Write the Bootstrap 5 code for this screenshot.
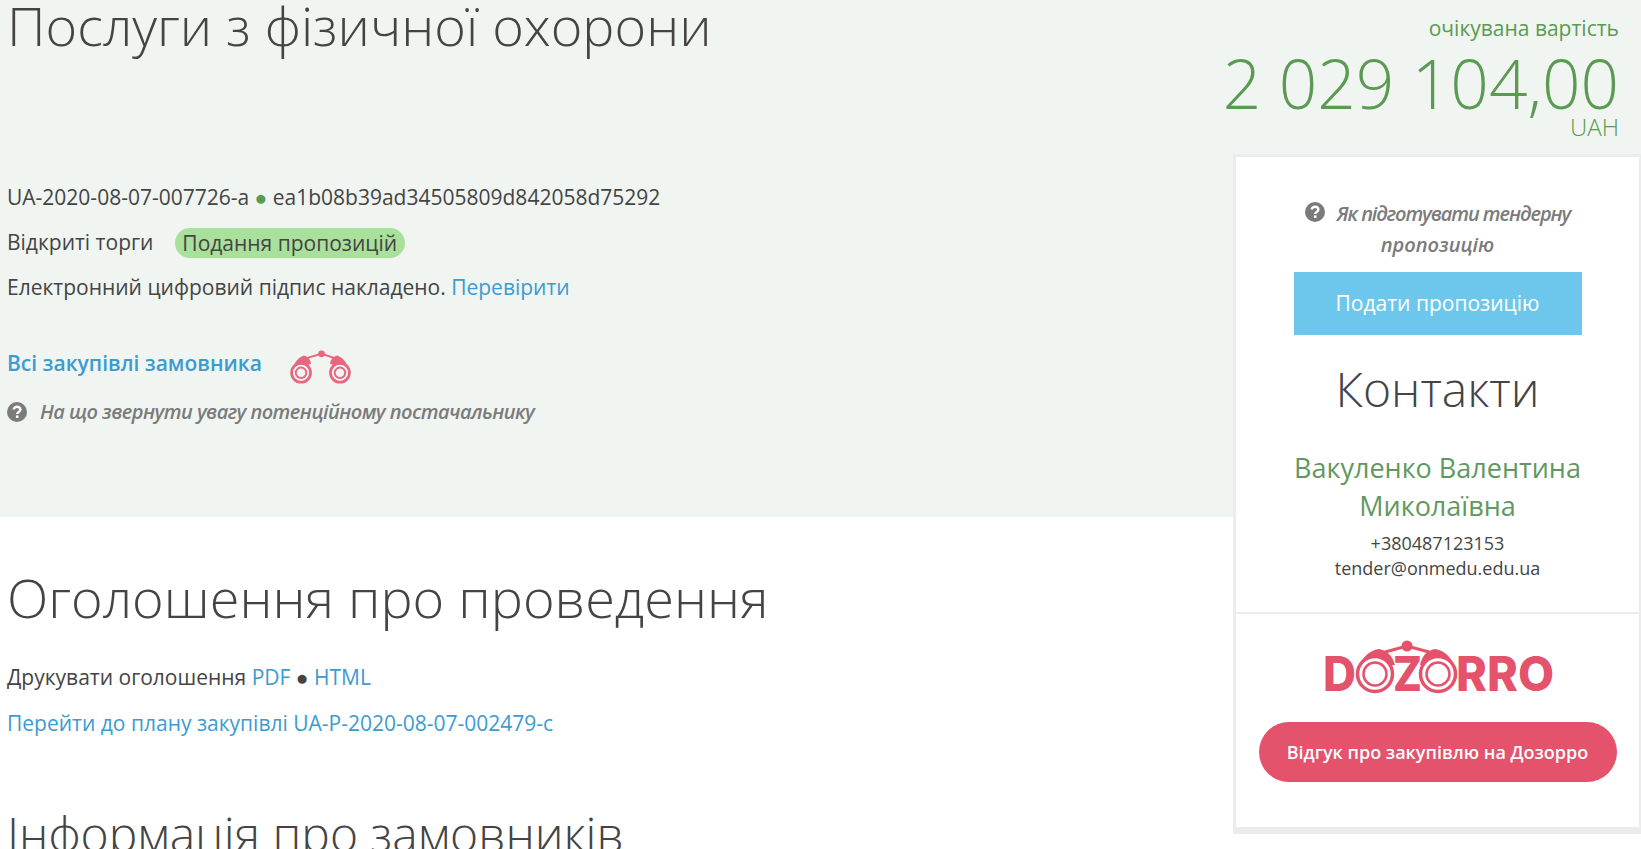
<!DOCTYPE html>
<html lang="uk">
  <head>
    <meta charset="UTF-8" />
    <meta name="viewport" content="width=device-width, initial-scale=1" />
    <title>Послуги з фізичної охорони</title>
    <link
      href="https://cdn.jsdelivr.net/npm/bootstrap@5.3.0/dist/css/bootstrap.min.css"
      rel="stylesheet"
    />
    <style>
      html, body { height: 849px; overflow: hidden; }
      body { font-family: "Open Sans", "Noto Sans", sans-serif; font-size: 21px; line-height: 25px; color: #444; background: #fff; }
      a { color: #3c9bd0; text-decoration: none; }
      .page-left { width: 1233px; flex: none; }
      .page-right { width: 408px; flex: none; }
      .hero-box { height: 517px; background: #f0f5f1; padding-left: 7px; }
      .tender-title { font-weight: 300; font-size: 54px; line-height: 50px; margin: 0; height: 175px; color: #444; }
      .info-line { height: 45px; display: flex; align-items: center; margin: 0; white-space: pre; }
      .dot-green { color: #5b9a52; }
      .status-pill { background: #a8e09c; border-radius: 15px; padding: 2px 7.5px; margin-left: 16px; line-height: 26px; }
      .buyer-row { margin-top: 31px; }
      .buyer-link { font-weight: 600; }
      .buyer-icon { margin-left: 28px; margin-top: 6px; }
      .help-row { margin-top: 13px; gap: 13px; }
      .help-text { font-style: italic; font-weight: 600; font-size: 20px; color: #7b7b7b; letter-spacing: -0.55px; }
      .help-icon { width: 20px; height: 20px; flex: none; }
      .section-title { font-weight: 300; font-size: 54px; line-height: 60px; margin: 0; color: #444; }
      .announce-box { padding-left: 7px; padding-top: 50px; }
      .print-line { margin: 38px 0 0; }
      .plan-line { margin: 21px 0 0; }
      .buyers-title { font-size: 48px; margin-top: 68px; }
      .price-box { background: #f0f5f1; height: 154px; margin-left: -20px; padding-right: 22px; text-align: right; color: #5b9a52; }
      .price-label { font-size: 21px; line-height: 26px; padding-top: 15px; }
      .price-value { font-weight: 300; font-size: 67.5px; line-height: 72px; margin-top: 6px; white-space: nowrap; }
      .price-cur { font-weight: 300; font-size: 24px; line-height: 24px; margin-top: -4px; }
      .side-card { border: 3px solid #ececec; border-right-width: 2px; border-bottom-width: 7px; background: #fff; }
      .side-top { height: 455px; text-align: center; padding: 41px 40px 0; }
      .side-help { letter-spacing: -1.1px; line-height: 31px; margin-bottom: 12px; }
      .side-help .help-icon { margin-right: 8px; vertical-align: -1px; }
      .side-help-last { letter-spacing: 0; }
      .side-bottom { height: 215px; border-top: 2px solid #ececec; text-align: center; padding-top: 25px; }
      .offer-btn { display: block; width: 288px; height: 63px; line-height: 63px; padding: 0; margin: 0 auto; background: #6dc7ec; color: #fff; font-size: 21px; border: 0; border-radius: 0; }
      .contacts-title { font-weight: 300; font-size: 48px; line-height: 60px; margin: 24px 0 30px; }
      .contact-name { color: #5f9860; font-size: 27px; line-height: 38px; margin: 0 -20px; }
      .contact-phone { font-size: 18px; line-height: 25px; margin-top: 6px; }
      .contact-line { font-size: 18px; line-height: 25px; }
      .dozorro-logo { display: block; margin: 0 auto 27px; }
      .dozorro-btn { display: block; width: 358px; height: 60px; line-height: 60px; margin: 0 auto; padding: 0; background: #e4526b; color: #fff; font-weight: 600; font-size: 18px; border: 0; border-radius: 30px; }
    </style>
  </head>
  <body>
    <div class="d-flex">
      <!-- Left column -->
      <div class="page-left">
        <div class="hero-box">
          <h1 class="tender-title">Послуги з фізичної охорони</h1>
          <p class="info-line">UA-2020-08-07-007726-a <span class="dot-green">●</span> ea1b08b39ad34505809d842058d75292</p>
          <p class="info-line">Відкриті торги <span class="status-pill">Подання пропозицій</span></p>
          <p class="info-line">Електронний цифровий підпис накладено. <a href="#">Перевірити</a></p>
          <div class="info-line buyer-row">
            <a href="#" class="buyer-link">Всі закупівлі замовника</a>
            <svg class="buyer-icon" width="61" height="34" viewBox="0 0 58 32" fill="none" stroke="#e8667e">
              <path d="M14 8 L30 3.5 L44 8" stroke-width="1.8" />
              <circle cx="30" cy="3.5" r="3.2" fill="#e8667e" stroke="none" />
              <path d="M1 20 Q5 8 13 5 Q19 6 20 13 Z" fill="#e8667e" stroke="none" />
              <path d="M57 20 Q53 8 45 5 Q39 6 38 13 Z" fill="#e8667e" stroke="none" />
              <circle cx="10.5" cy="21.5" r="9" fill="#f0f5f1" stroke-width="2.6" />
              <circle cx="10.5" cy="21.5" r="5" stroke-width="1.8" />
              <circle cx="47.5" cy="21.5" r="9" fill="#f0f5f1" stroke-width="2.6" />
              <circle cx="47.5" cy="21.5" r="5" stroke-width="1.8" />
            </svg>
          </div>
          <div class="d-flex align-items-center help-row help-text">
            <svg class="help-icon" viewBox="0 0 20 20"><circle cx="10" cy="10" r="10" fill="#7b7b7b" /><path d="M6.8 7.6 C6.8 3.8 13.4 3.8 13.4 7.6 C13.4 10 10.2 9.8 10.2 12" fill="none" stroke="#fff" stroke-width="2.4" /><rect x="8.9" y="13.4" width="2.6" height="2.6" fill="#fff" /></svg>
            <span>На що звернути увагу потенційному постачальнику</span>
          </div>
        </div>
        <div class="announce-box">
          <h2 class="section-title">Оголошення про проведення</h2>
          <p class="print-line">Друкувати оголошення <a href="#">PDF</a> ● <a href="#">HTML</a></p>
          <p class="plan-line"><a href="#">Перейти до плану закупівлі UA-P-2020-08-07-002479-c</a></p>
          <h2 class="section-title buyers-title">Інформація про замовників</h2>
        </div>
      </div>
      <!-- Right column -->
      <div class="page-right">
        <div class="price-box">
          <div class="price-label">очікувана вартість</div>
          <div class="price-value">2 029 104,00</div>
          <div class="price-cur">UAH</div>
        </div>
        <div class="side-card">
          <div class="side-top">
            <div class="help-text side-help">
              <svg class="help-icon" viewBox="0 0 20 20"><circle cx="10" cy="10" r="10" fill="#7b7b7b" /><path d="M6.8 7.6 C6.8 3.8 13.4 3.8 13.4 7.6 C13.4 10 10.2 9.8 10.2 12" fill="none" stroke="#fff" stroke-width="2.4" /><rect x="8.9" y="13.4" width="2.6" height="2.6" fill="#fff" /></svg>
              Як підготувати тендерну<br /><span class="side-help-last">пропозицію</span>
            </div>
            <a href="#" class="btn offer-btn">Подати пропозицію</a>
            <h2 class="contacts-title">Контакти</h2>
            <div class="contact-name">Вакуленко Валентина<br />Миколаївна</div>
            <div class="contact-phone">+380487123153</div>
            <div class="contact-line">tender@onmedu.edu.ua</div>
          </div>
          <div class="side-bottom">
            <svg class="dozorro-logo" width="230" height="56" viewBox="0 0 230 56">
              <g font-family="Inter, 'Open Sans', sans-serif" font-weight="800" font-size="48" fill="#e4526b">
                <text x="0" y="52" textLength="33" lengthAdjust="spacingAndGlyphs">D</text>
                <text x="70" y="52" textLength="29" lengthAdjust="spacingAndGlyphs">Z</text>
                <text x="133" y="52" textLength="98" lengthAdjust="spacingAndGlyphs">RRO</text>
              </g>
              <path d="M62 13 L84 7 L106 13" fill="none" stroke="#e4526b" stroke-width="3" />
              <circle cx="84" cy="7" r="5.5" fill="#e4526b" />
              <path d="M34 30 Q42 12 56 10 Q68 12 72 26 Z" fill="#e4526b" />
              <path d="M133 30 Q126 12 112 10 Q100 12 97 26 Z" fill="#e4526b" />
              <g fill="#fff" stroke="#e4526b">
                <circle cx="52" cy="35" r="17.5" stroke-width="3.5" />
                <circle cx="52" cy="35" r="11.5" stroke-width="2.5" />
                <circle cx="115" cy="35" r="17.5" stroke-width="3.5" />
                <circle cx="115" cy="35" r="11.5" stroke-width="2.5" />
              </g>
            </svg>
            <a href="#" class="btn dozorro-btn">Відгук про закупівлю на Дозорро</a>
          </div>
        </div>
      </div>
    </div>

    <script src="https://cdn.jsdelivr.net/npm/bootstrap@5.3.0/dist/js/bootstrap.bundle.min.js"></script>
  </body>
</html>
